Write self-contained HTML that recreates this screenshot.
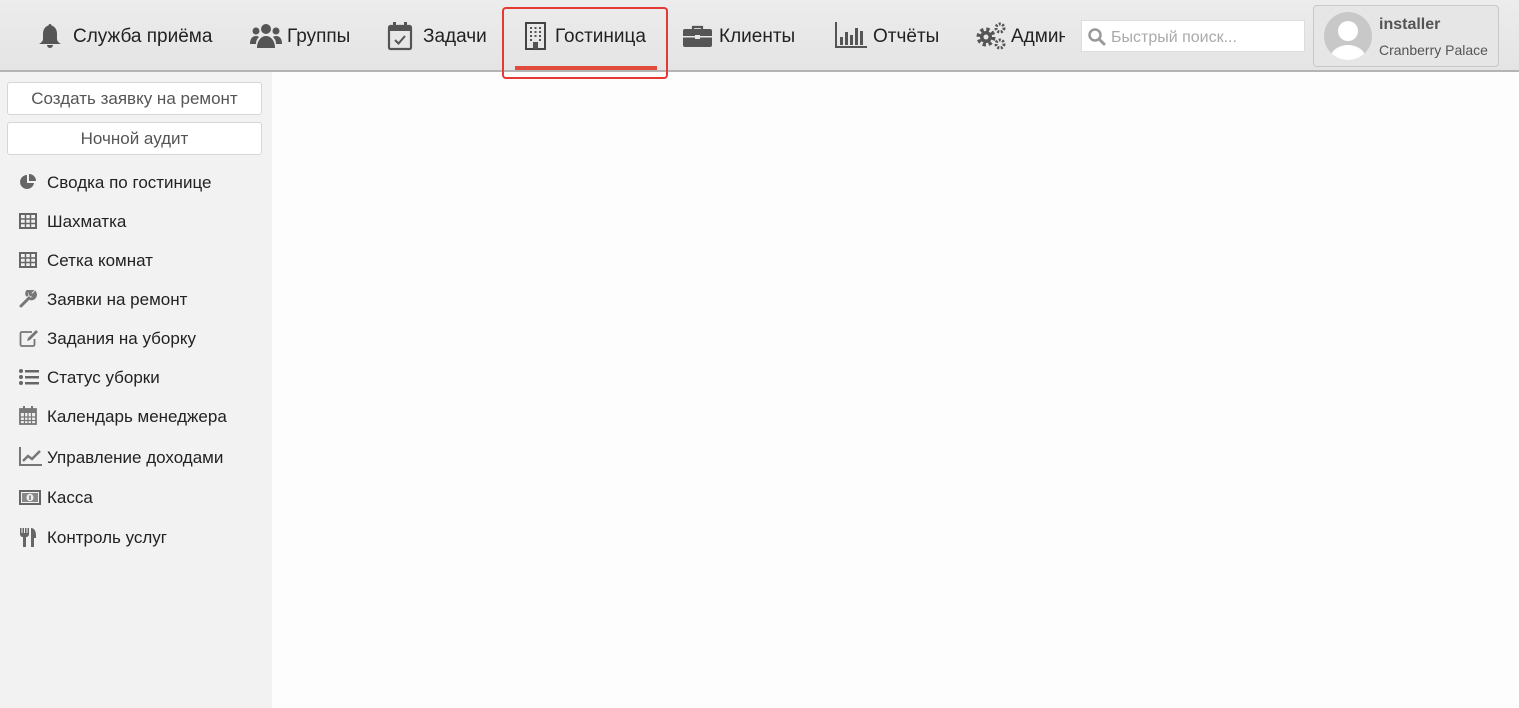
<!DOCTYPE html>
<html><head><meta charset="utf-8"><style>
*{margin:0;padding:0;box-sizing:border-box}
body{width:1519px;height:708px;overflow:hidden;background:#fdfdfd;font-family:"Liberation Sans",sans-serif;position:relative}
.hdr{position:absolute;left:0;top:0;width:1519px;height:72px;background:linear-gradient(#ececec,#e4e4e4);border-bottom:2px solid #b4b4b4}
.nav{position:absolute;top:25px;font-size:19px;color:#222;line-height:24px;white-space:nowrap}
.ic{position:absolute}
.side{position:absolute;left:0;top:72px;width:272px;height:636px;background:#f2f2f2}
.btn{position:absolute;left:7px;width:255px;height:33px;background:#fff;border:1px solid #d6d6d6;border-radius:3px;text-align:center;font-size:17px;color:#555;line-height:31px}
.it{position:absolute;left:47px;font-size:17px;color:#222;line-height:20px;white-space:nowrap}
.si{position:absolute;left:19px}
</style></head><body>
<div class="hdr"></div>
<svg class="ic" style="left:37px;top:22px" width="26" height="28" viewBox="0 0 26 28"><path d="M13 2c1 0 1.5.7 1.5 1.5C18 4.5 20 7.5 20 12v5c0 2 2 4 4 5H2c2-1 4-3 4-5v-5c0-4.5 2-7.5 5.5-8.5C11.5 2.7 12 2 13 2z" fill="#555"/><path d="M10 23a3 3 0 0 0 6 0z" fill="#555"/></svg>
<div class="nav" style="left:73px">Служба приёма</div>
<svg class="ic" style="left:250px;top:22px" width="32" height="28" viewBox="0 0 32 28"><circle cx="16" cy="7" r="5" fill="#555"/><circle cx="6" cy="9" r="3.5" fill="#555"/><circle cx="26" cy="9" r="3.5" fill="#555"/><path d="M7 26c0-7 4-12 9-12s9 5 9 12z" fill="#555"/><path d="M0 22c0-5 2-8 6-8 2 0 3 1 3 1-2 2-3 4-3 7z" fill="#555"/><path d="M32 22c0-5-2-8-6-8-2 0-3 1-3 1 2 2 3 4 3 7z" fill="#555"/></svg>
<div class="nav" style="left:287px">Группы</div>
<svg class="ic" style="left:387px;top:21px" width="26" height="30" viewBox="0 0 26 30"><rect x="2" y="5" width="22" height="23" rx="1.5" fill="none" stroke="#555" stroke-width="2.2"/><rect x="2" y="5" width="22" height="5" fill="#555"/><rect x="6" y="1" width="3" height="6" fill="#555"/><rect x="17" y="1" width="3" height="6" fill="#555"/><path d="M8 19l3.5 3.5L18 15" fill="none" stroke="#555" stroke-width="2"/></svg>
<div class="nav" style="left:423px">Задачи</div>
<div style="position:absolute;left:502px;top:7px;width:166px;height:72px;border:2px solid #e53935;border-radius:4px"></div>
<div style="position:absolute;left:515px;top:66px;width:142px;height:4px;background:#e04b3c"></div>
<svg class="ic" style="left:525px;top:22px" width="21" height="28" viewBox="0 0 21 28"><rect x="1" y="1" width="19" height="26" fill="none" stroke="#444" stroke-width="2"/><g fill="#555"><rect x="5" y="5" width="2" height="2"/><rect x="9.5" y="5" width="2" height="2"/><rect x="14" y="5" width="2" height="2"/><rect x="5" y="9" width="2" height="2"/><rect x="9.5" y="9" width="2" height="2"/><rect x="14" y="9" width="2" height="2"/><rect x="5" y="13" width="2" height="2"/><rect x="9.5" y="13" width="2" height="2"/><rect x="14" y="13" width="2" height="2"/><rect x="5" y="17" width="2" height="2"/><rect x="14" y="17" width="2" height="2"/><rect x="8" y="20" width="5" height="7"/></g></svg>
<div class="nav" style="left:555px">Гостиница</div>
<svg class="ic" style="left:683px;top:25px" width="29" height="22" viewBox="0 0 29 22"><path d="M10 4V2h9v2" fill="none" stroke="#555" stroke-width="2.2"/><rect x="0" y="4" width="29" height="18" rx="2" fill="#555"/><rect x="0" y="11" width="29" height="1.5" fill="#e8e8e8"/><rect x="12" y="10" width="5" height="4" fill="#e8e8e8"/></svg>
<div class="nav" style="left:719px">Клиенты</div>
<svg class="ic" style="left:835px;top:22px" width="32" height="26" viewBox="0 0 32 26"><path d="M1 0v25h31" fill="none" stroke="#555" stroke-width="2"/><g fill="#555"><rect x="5" y="15" width="3" height="8"/><rect x="10" y="10" width="3" height="13"/><rect x="15" y="13" width="3" height="10"/><rect x="20" y="6" width="3" height="17"/><rect x="25" y="9" width="3" height="14"/></g></svg>
<div class="nav" style="left:873px">Отчёты</div>
<svg class="ic" style="left:975px;top:22px" width="31" height="28" viewBox="0 0 31 28"><circle cx="11" cy="15" r="7" fill="none" stroke="#555" stroke-width="5" stroke-dasharray="3 2.5"/><circle cx="11" cy="15" r="6" fill="#555"/><circle cx="11" cy="15" r="2.5" fill="#e8e8e8"/><circle cx="25" cy="6" r="4" fill="none" stroke="#555" stroke-width="3" stroke-dasharray="2 1.5"/><circle cx="25" cy="22" r="4" fill="none" stroke="#555" stroke-width="3" stroke-dasharray="2 1.5"/></svg>
<div class="nav" style="left:1011px;width:54px;overflow:hidden">Админ</div>
<div style="position:absolute;left:1081px;top:20px;width:224px;height:32px;background:#fff;border:1px solid #ddd"></div>
<svg class="ic" style="left:1087px;top:27px" width="19" height="19" viewBox="0 0 19 19"><circle cx="8" cy="8" r="5.5" fill="none" stroke="#999" stroke-width="2.5"/><path d="M12 12l5 5" stroke="#999" stroke-width="3" stroke-linecap="round"/></svg>
<div class="nav" style="left:1111px;top:26px;font-size:16px;color:#aaa">Быстрый поиск...</div>
<div style="position:absolute;left:1313px;top:5px;width:186px;height:62px;border:1px solid #c8c8c8;border-radius:4px;background:#e6e6e6"></div>
<svg class="ic" style="left:1323px;top:11px" width="50" height="50" viewBox="0 0 50 50"><defs><clipPath id="c"><circle cx="25" cy="25" r="24"/></clipPath></defs><circle cx="25" cy="25" r="24" fill="#c8c8c8"/><g clip-path="url(#c)" fill="#fff"><circle cx="25" cy="20" r="10"/><ellipse cx="25" cy="48" rx="18" ry="14"/></g></svg>
<div class="nav" style="left:1379px;top:13px;font-size:16px;font-weight:bold;color:#555">installer</div>
<div class="nav" style="left:1379px;top:38px;font-size:14px;color:#555">Cranberry Palace</div>

<div class="side"></div>
<div class="btn" style="top:82px">Создать заявку на ремонт</div>
<div class="btn" style="top:122px">Ночной аудит</div>

<svg class="si" style="top:173px" width="18" height="18" viewBox="0 0 18 18"><path d="M8 2a7 7 0 1 0 7 8H8z" fill="#666"/><path d="M10 1v7h7A7 7 0 0 0 10 1z" fill="#666"/></svg>
<div class="it" style="top:173px">Сводка по гостинице</div>
<svg class="si" style="top:213px" width="18" height="16" viewBox="0 0 18 16"><rect x="1" y="1" width="16" height="14" fill="none" stroke="#666" stroke-width="2"/><path d="M1 6h16M1 10.5h16M6.5 1v14M11.5 1v14" stroke="#666" stroke-width="1.5"/></svg>
<div class="it" style="top:212px">Шахматка</div>
<svg class="si" style="top:252px" width="18" height="16" viewBox="0 0 18 16"><rect x="1" y="1" width="16" height="14" fill="none" stroke="#666" stroke-width="2"/><path d="M1 6h16M1 10.5h16M6.5 1v14M11.5 1v14" stroke="#666" stroke-width="1.5"/></svg>
<div class="it" style="top:251px">Сетка комнат</div>
<svg class="si" style="top:290px" width="18" height="18" viewBox="0 0 18 18"><path d="M2 16l8-8M10 8a4 4 0 0 0 6-5l-2.5 2.5-2-1-.5-2L13.5 0A4 4 0 0 0 8 5" stroke="#777" stroke-width="3" fill="none" stroke-linecap="round"/></svg>
<div class="it" style="top:290px">Заявки на ремонт</div>
<svg class="si" style="top:329px" width="20" height="18" viewBox="0 0 20 18"><path d="M13 3H3a1.5 1.5 0 0 0-1.5 1.5v11A1.5 1.5 0 0 0 3 17h11a1.5 1.5 0 0 0 1.5-1.5V10" fill="none" stroke="#777" stroke-width="1.8"/><path d="M8 12l1-3 8-8 2 2-8 8z" fill="#777"/></svg>
<div class="it" style="top:329px">Задания на уборку</div>
<svg class="si" style="top:369px" width="20" height="16" viewBox="0 0 20 16"><g fill="#666"><circle cx="2" cy="2" r="2"/><circle cx="2" cy="8" r="2"/><circle cx="2" cy="14" r="2"/><rect x="6" y="1" width="14" height="2.5"/><rect x="6" y="7" width="14" height="2.5"/><rect x="6" y="13" width="14" height="2.5"/></g></svg>
<div class="it" style="top:368px">Статус уборки</div>
<svg class="si" style="top:406px" width="18" height="19" viewBox="0 0 18 19"><rect x="1" y="3" width="16" height="15" fill="none" stroke="#777" stroke-width="1.8"/><rect x="1" y="3" width="16" height="4" fill="#777"/><path d="M1 11h16M1 14.5h16M5.5 7v11M9 7v11M12.5 7v11" stroke="#777" stroke-width="1.2"/><rect x="4" y="0" width="2" height="4" fill="#777"/><rect x="12" y="0" width="2" height="4" fill="#777"/></svg>
<div class="it" style="top:407px">Календарь менеджера</div>
<svg class="si" style="top:447px" width="23" height="19" viewBox="0 0 23 19"><path d="M1 0v18h22" fill="none" stroke="#777" stroke-width="2"/><path d="M4 14l5-5 4 3 8-8" fill="none" stroke="#777" stroke-width="2.5"/></svg>
<div class="it" style="top:448px">Управление доходами</div>
<svg class="si" style="top:490px" width="22" height="15" viewBox="0 0 22 15"><rect x="1" y="1" width="20" height="13" fill="none" stroke="#666" stroke-width="2"/><rect x="3" y="3" width="16" height="9" fill="#888"/><ellipse cx="11" cy="7.5" rx="3.5" ry="3.8" fill="#eee"/><rect x="10.3" y="5.5" width="1.4" height="4.5" fill="#666"/></svg>
<div class="it" style="top:488px">Касса</div>
<svg class="si" style="top:528px" width="18" height="19" viewBox="0 0 18 19"><path d="M1 0v6c0 2 1.5 3 3 3v10h3V9c1.5 0 3-1 3-3V0H8.5v5h-1V0H6v5H5V0H3.5v5h-1V0z" fill="#666"/><path d="M12 0c3 0 5 3 5 7v3h-2v9h-3z" fill="#666"/></svg>
<div class="it" style="top:528px">Контроль услуг</div>
</body></html>
